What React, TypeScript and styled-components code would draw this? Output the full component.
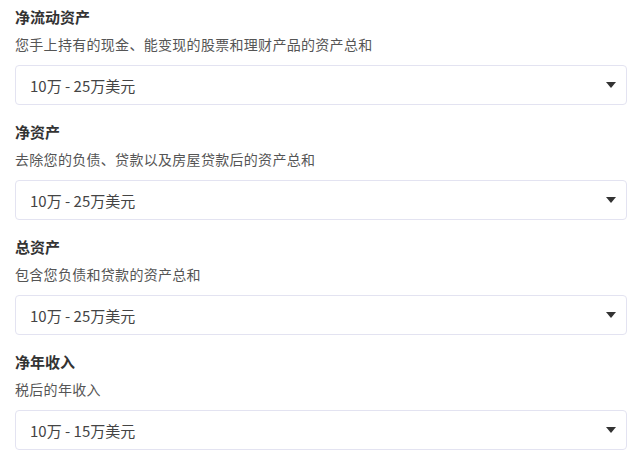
import React from 'react';
import styled, { createGlobalStyle } from 'styled-components';

const GlobalStyle = createGlobalStyle`
  * { box-sizing: border-box; }
  body {
    margin: 0;
    background: #fff;
    font-family: "Noto Sans CJK SC", "Noto Sans", sans-serif;
  }
`;

const Page = styled.div`
  padding: 7px 13px 0 15px;
  display: flex;
  flex-direction: column;
  gap: 17px;
`;

const Field = styled.div`
  display: flex;
  flex-direction: column;
`;

const Title = styled.div`
  font-size: 15px;
  line-height: 20px;
  font-weight: 700;
  color: #333;
`;

const Desc = styled.div`
  margin-top: 7px;
  font-size: 14px;
  letter-spacing: 0.3px;
  line-height: 20px;
  color: #555;
`;

const Select = styled.div`
  margin-top: 11px;
  height: 40px;
  border: 1px solid #e3e3f1;
  border-radius: 4px;
  display: flex;
  align-items: center;
  justify-content: space-between;
  padding: 0 10px 0 14px;
  font-size: 15px;
  color: #444;
`;

const Caret = styled.svg`
  width: 10px;
  height: 6px;
  fill: #333;
`;

interface FieldProps {
  title: string;
  desc: string;
  value: string;
}

const SelectField: React.FC<FieldProps> = ({ title, desc, value }) => (
  <Field>
    <Title>{title}</Title>
    <Desc>{desc}</Desc>
    <Select>
      <span>{value}</span>
      <Caret viewBox="0 0 10 6">
        <path d="M0 0h10L5 6z" />
      </Caret>
    </Select>
  </Field>
);

const fields: FieldProps[] = [
  { title: '净流动资产', desc: '您手上持有的现金、能变现的股票和理财产品的资产总和', value: '10万 - 25万美元' },
  { title: '净资产', desc: '去除您的负债、贷款以及房屋贷款后的资产总和', value: '10万 - 25万美元' },
  { title: '总资产', desc: '包含您负债和贷款的资产总和', value: '10万 - 25万美元' },
  { title: '净年收入', desc: '税后的年收入', value: '10万 - 15万美元' },
];

export default function App() {
  return (
    <>
      <GlobalStyle />
      <Page>
        {fields.map((f) => (
          <SelectField key={f.title} {...f} />
        ))}
      </Page>
    </>
  );
}
